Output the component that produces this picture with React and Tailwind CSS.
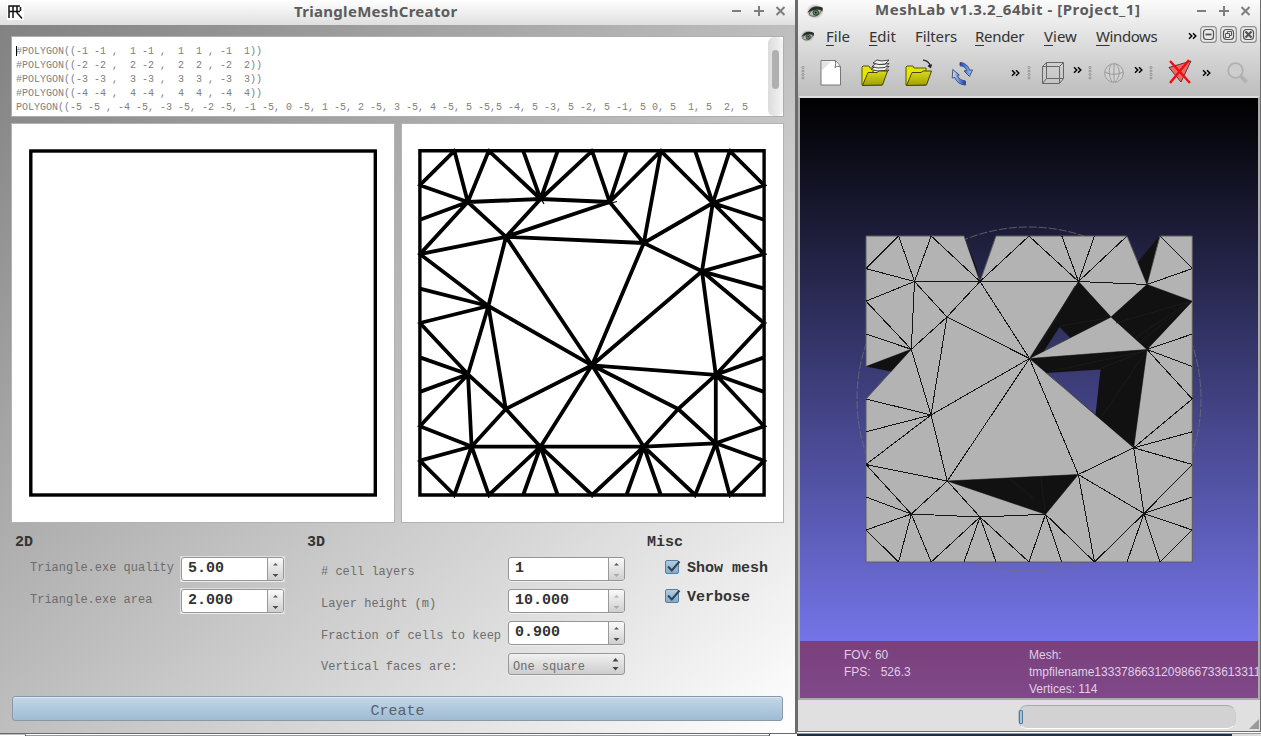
import React from "react";

/* ---------- mesh data ---------- */

const gx = [419.9, 454.4, 488.8, 523.2, 557.7, 592.1, 626.500, 660.8, 695.2, 729.700, 764.1];
const gy = [150.8, 185.2, 219.7, 254.1, 288.6, 323, 357.4, 391.9, 426.3, 460.7, 495];
const T = gx.map((x) => [x, gy[0]]);
const B = gx.map((x) => [x, gy[10]]);
const L = gy.map((y) => [gx[0], y]);
const R = gy.map((y) => [gx[10], y]);
const v = {
  a: [467.8, 202], b: [540.6, 199], c: [609.6, 202], d: [506, 236.8], e: [488.4, 306],
  f: [643.8, 243], g: [712.8, 203], h: [702, 271.3], i: [592, 365.3], j: [468, 374.3],
  k: [505.8, 409], l: [471.6, 446.5], m: [540.5, 446.7], n: [643.8, 446.7], o: [715.8, 443.3],
  p: [715.8, 374.8], q: [678.2, 409],
};
const fan = (c, list) => list.map((p) => [c, p]);
const edges2d = [
  [L[1], T[1]], [T[9], R[1]], [L[9], B[1]], [R[9], B[9]],
  ...fan(v.a, [T[1], T[2], L[1], L[2], L[3], v.b, v.d]),
  ...fan(v.b, [T[2], T[3], T[4], T[5], v.c, v.d]),
  ...fan(v.c, [T[5], T[6], T[7], v.d, v.f]),
  ...fan(v.d, [L[3], v.f, v.e, v.i]),
  ...fan(v.e, [L[3], L[4], L[5], v.i, v.j, v.k]),
  ...fan(v.f, [T[7], v.g, v.h, v.i]),
  ...fan(v.g, [T[7], T[8], T[9], R[1], R[2], R[3], v.h]),
  ...fan(v.h, [R[3], R[4], R[5], v.i, v.p]),
  ...fan(v.j, [L[5], L[6], L[7], L[8], v.k, v.l]),
  ...fan(v.k, [v.l, v.i, v.m]),
  ...fan(v.l, [L[8], L[9], B[1], B[2], v.m]),
  ...fan(v.m, [B[2], B[3], B[4], B[5], v.i, v.n]),
  ...fan(v.n, [B[5], B[6], B[7], B[8], v.i, v.q, v.o]),
  ...fan(v.o, [B[8], B[9], R[8], R[9], v.q, v.p]),
  ...fan(v.p, [R[5], R[6], R[7], R[8], v.i, v.q]),
  [v.i, v.q],
];

const hx = [866, 898.6, 931.2, 964, 996, 1029, 1061.8, 1094.5, 1127, 1160, 1192.3];
const hy = [236, 268.6, 301.2, 334, 366.5, 399, 431.8, 464.5, 497, 530, 562];
const t = hx.map((x) => [x, hy[0]]);
const u = hx.map((x) => [x, hy[10]]);
const l = hy.map((y) => [hx[0], y]);
const r = hy.map((y) => [hx[10], y]);
const w = {
  a: [914.5, 281.5], b: [980, 281.5], c: [947, 317], d: [911.3, 349.3], e: [931, 415],
  f: [1029.5, 358.5], g: [947.3, 481], h: [911.3, 514], i: [980, 517], j: [1078.5, 281.5],
  k: [1147, 284.5], l: [1111, 317], m: [1147, 349.5], n: [1133.7, 447.8], o: [1078.3, 474.5],
  p: [1144, 513.5], q: [1045.5, 514.3],
};
const edges3d = [
  [t[1], l[1]], [t[9], r[1]], [l[9], u[1]], [r[9], u[9]],
  ...fan(w.a, [t[1], t[2], l[1], l[2], w.b, w.c, w.d]),
  ...fan(w.b, [t[2], t[5], w.j, w.c, w.f]),
  ...fan(w.c, [w.d, w.e, w.f]),
  ...fan(w.d, [l[2], l[3], w.e]),
  ...fan(w.e, [l[5], l[6], l[7], w.f, w.g]),
  ...fan(w.f, [w.g, w.o]),
  ...fan(w.g, [l[7], w.h, w.i]),
  ...fan(w.h, [l[7], l[8], l[9], u[1], u[2], w.i]),
  ...fan(w.i, [u[2], u[3], u[4], u[5], w.q]),
  ...fan(w.j, [t[5], t[6], t[7], t[8], w.k]),
  [w.k, r[1]],
  ...fan(w.m, [r[3], r[4], r[5]]),
  ...fan(w.n, [r[5], r[6], r[7], w.o, w.p]),
  ...fan(w.o, [w.p, u[7]]),
  ...fan(w.p, [r[7], r[8], r[9], u[7], u[8], u[9]]),
  ...fan(w.q, [u[5], u[6], u[7]]),
];
const toPath = (edges) => edges.map(([p, q]) => `M${p[0]} ${p[1]}L${q[0]} ${q[1]}`).join("");
const poly = (...pts) => "M" + pts.map((p) => p.join(" ")).join("L") + "Z";

const surface =
  poly(t[0], t[3], w.b, t[4], t[8], w.k, t[9], t[10], u[10], u[0], l[5], w.d, l[4]) +
  poly(w.j, w.l, w.f) + poly(w.k, r[2], w.m, w.l) + poly(w.f, w.m, w.n) + poly(w.g, w.o, w.q);
const shadow =
  poly(w.j, w.l, w.f) + poly([1059.5, 327], [1070, 337.5], [1044, 351]) +
  poly(w.k, r[2], w.m, w.l) +
  poly(w.f, w.m, w.n) + poly([1046, 373], [1100.5, 369.5], [1095.5, 414.5]) +
  poly(w.g, w.o, w.q) + poly(l[4], w.d, [891, 371.5]) +
  poly([1159, 236.5], w.k, [1138, 262]) + poly(t[3], w.b, [976, 266]);

/* ---------- small parts ---------- */

function WindowButtons() {
  return (
    <svg className="block h-[12px] w-[56px]" viewBox="0 0 56 12" fill="none" stroke="#7d7d7d" strokeWidth="2">
      <path d="M1 6h9M23 6h10M28 1v10" />
      <path d="M45.500 2l8 8M53.500 2l-8 8" />
    </svg>
  );
}

function Spinner({ value, width, boxed, up = true, down = true }) {
  return (
    <div className={`flex h-[26px] p-px ${boxed ? "bg-[#dedede]" : ""} ${width}`}>
      <div className="flex min-w-0 flex-1 overflow-hidden rounded-[3px] border border-[#959595] bg-white shadow-[0_1px_0_#eeeeee]">
        <div className="flex-1 whitespace-pre pl-[6px] text-[15px] font-semibold leading-[22px] text-[#333]">{value}</div>
        <svg className="h-full w-[16px] border-l border-[#999] bg-gradient-to-b from-[#fafafa] to-[#cfcfcf]" viewBox="0 0 15 22">
          <path d="M5 7.500h5L7.500 5z" fill={up ? "#5a5a5a" : "#b0b0b0"} />
          <path d="M4.500 16h6l-3 3z" fill={down ? "#4c4c4c" : "#aaa"} />
        </svg>
      </div>
    </div>
  );
}

function Check({ label }) {
  return (
    <div className="flex h-[29px] items-center">
      <svg className="h-[16px] w-[18px]" viewBox="0 0 18 16">
        <defs>
          <linearGradient id="ck" x2="0" y2="1"><stop stopColor="#b4cfe3" /><stop offset="1" stopColor="#7fa9cc" /></linearGradient>
        </defs>
        <rect x="1.500" y="0.500" width="13" height="13" rx="1.500" fill="url(#ck)" stroke="#587da0" />
        <path d="M4 6.500l3.800 4L15.500 1.500" fill="none" stroke="#34424f" strokeWidth="2" />
      </svg>
      <span className="ml-[5px] whitespace-pre pt-[2px] text-[15px] font-bold leading-[18px] text-[#333]">{label}</span>
    </div>
  );
}

function Eye({ className }) {
  return (
    <svg className={className} viewBox="0 0 18 16">
      <defs><radialGradient id="eyeglow"><stop stopColor="#666" /><stop offset="0.55" stopColor="#999" /><stop offset="1" stopColor="#ddd" stopOpacity="0" /></radialGradient></defs>
      <ellipse cx="9" cy="8" rx="9" ry="8" fill="url(#eyeglow)" />
      <path d="M3 11C5 6 9 4.500 15.500 5c0 3-2 6-6 7.500-2.500.5-5 0-6.500-1.500z" fill="#b9beb7" stroke="#444" strokeWidth="0.800" />
      <path d="M1.500 9.500C4 4 9 1.500 16.500 4c.5 1 .3 3-.3 4.200C15 5.500 8 4.500 1.500 9.500z" fill="#2a2a2a" />
      <circle cx="9.800" cy="9" r="2.700" fill="#5f9464" stroke="#222" strokeWidth="0.900" />
      <circle cx="9.800" cy="9" r="0.900" fill="#101010" />
    </svg>
  );
}

function Chevrons({ className }) {
  return (
    <svg className={"h-[8px] w-[9px] shrink-0 " + className} viewBox="0 0 9 8" fill="none" stroke="#000" strokeWidth="1.500">
      <path d="M1 1.200l2.800 2.800L1 6.800M5 1.200l2.800 2.800L5 6.800" />
    </svg>
  );
}

function Handle({ className }) {
  return (
    <svg className={"h-[14px] w-[4px] shrink-0 " + className} viewBox="0 0 4 14" fill="#f5f5f5" stroke="#777" strokeWidth="0.800">
      <circle cx="2" cy="1.500" r="1" /><circle cx="2" cy="5" r="1" /><circle cx="2" cy="8.500" r="1" /><circle cx="2" cy="12" r="1" />
    </svg>
  );
}

function Folder({ stack, className }) {
  return (
    <svg className={"h-[28px] w-[30px] shrink-0 " + className} viewBox="0 0 30 28" strokeLinejoin="round">
      <defs><linearGradient id="fold" x2="0" y2="1"><stop stopColor="#dada20" /><stop offset="1" stopColor="#a0a000" /></linearGradient></defs>
      <path d="M1 26V8l1-1h6l1 2h12v17z" fill="#e6e600" stroke="#54540c" />
      {stack ? (
        <g fill="#f2f2f2" stroke="#222" strokeWidth="0.800">
          <path d="M10 14l4-3 5 1 9-1-4 4-7 1z" />
          <path d="M10 10.500l4-3 5 1 9-1-4 4-7 .5z" />
          <path d="M11 7.500l4-3 5 1 8-1-4 4-7 .5z" />
          <path d="M12 4l4-3 5 1 7-1-4 4-6 .5z" />
        </g>
      ) : (
        <g stroke="#222" fill="none" strokeWidth="1.200"><path d="M18 1.200c4 .3 6.500 2.500 7.500 6.500" /><path d="M23 6.500l2.500 2 1-3" fill="#222" /></g>
      )}
      <path d="M1.500 26.500L7 13.500h9l2-1.500h8.500L21.500 26z" fill="url(#fold)" stroke="#45450a" />
    </svg>
  );
}

function MdiButton({ children }) {
  return (
    <svg className="h-[17px] w-[17px]" viewBox="0 0 17 17" fill="none" stroke="#555" strokeWidth="1.200">
      <rect x="0.700" y="0.700" width="15.600" height="15.600" rx="3" fill="#e9e9e9" stroke="#8f8f8f" />
      <rect x="3.500" y="3.500" width="10" height="10" rx="3" />
      {children}
    </svg>
  );
}

function MenuItem({ pre = "", hot, post, className }) {
  return (
    <span className={"whitespace-pre " + className}>
      {pre}<span className="underline decoration-1 underline-offset-[3px]">{hot}</span>{post}
    </span>
  );
}

const Label = ({ children, className = "" }) => (
  <div className={"whitespace-pre text-[12px] leading-[16px] text-[#6c6c6c] " + className}>{children}</div>
);

/* ---------- triangle mesh window ---------- */

const polygonText = `#POLYGON((-1 -1 ,  1 -1 ,  1  1 , -1  1))
#POLYGON((-2 -2 ,  2 -2 ,  2  2 , -2  2))
#POLYGON((-3 -3 ,  3 -3 ,  3  3 , -3  3))
#POLYGON((-4 -4 ,  4 -4 ,  4  4 , -4  4))
POLYGON((-5 -5 , -4 -5, -3 -5, -2 -5, -1 -5, 0 -5, 1 -5, 2 -5, 3 -5, 4 -5, 5 -5,5 -4, 5 -3, 5 -2, 5 -1, 5 0, 5  1, 5  2, 5`;

function CreatorWindow() {
  return (
    <section className="flex h-[736px] w-[797px] shrink-0 flex-col">
      <div className="flex h-[733px] border-r-2 border-[#6b6b6b]">
        <div className="flex w-[795px] flex-col">
          <header className="flex h-[25px] shrink-0 items-center bg-gradient-to-b from-white to-[#dfdfdf]">
            <svg className="ml-[7px] mt-[-2px] h-[17px] w-[17px] bg-white" viewBox="0 0 17 17" fill="none" stroke="#111" strokeWidth="1.500">
              <path d="M2 15V3h11M2 8.500h11M6 15V3M10 3v7M13.500 4v4M10 10l2 2M12 12l3 3.500" />
            </svg>
            <h1 className="ml-[270px] w-[170px] whitespace-pre font-['Noto_Sans',sans-serif] text-[15px] font-bold leading-[24px] tracking-[0.300px] text-[#5c5c5c] -mt-[3px]">TriangleMeshCreator</h1>
            <div className="ml-[267px] mt-[-3px]"><WindowButtons /></div>
          </header>

          <div className="flex h-[708px] flex-col bg-gradient-to-br from-[#828282] to-white px-[11px] pt-[11px] font-['Liberation_Mono',monospace]">
            <div className="flex h-[81px] w-[773px] shrink-0 border border-[#aeaeae] bg-white">
              <pre className="relative w-[756px] overflow-hidden pl-[4px] pt-[8px] font-['Liberation_Mono',monospace] text-[10px] leading-[14px] text-[#808080]">
                <span className="absolute left-[4px] top-[9px] h-[10px] w-px bg-black" />
                {polygonText}
              </pre>
              <div className="flex w-[15px] justify-center rounded-[6px] bg-gradient-to-r from-[#dcdcdc] to-[#f4f4f4]">
                <div className="mt-[13px] h-[39px] w-[7px] rounded-full bg-[#b0b0b0]" />
              </div>
            </div>

            <div className="mt-[6px] flex w-[773px] shrink-0 gap-[6px]">
              <svg className="h-[400px] w-[384px] border border-[#b2b2b2] bg-white" viewBox="12 124 382 398">
                <rect x="30.800" y="151" width="344.500" height="344" fill="none" stroke="#000" strokeWidth="3.400" />
              </svg>
              <svg className="h-[400px] w-[383px] border border-[#b2b2b2] bg-white" viewBox="402 124 381 398">
                <path d={poly(T[0], T[10], B[10], B[0])} fill="none" stroke="#000" strokeWidth="3.400" />
                <path d={toPath(edges2d)} fill="none" stroke="#000" strokeWidth="3.800" />
                <path d="M454.400 148.500v3M488.700 148.500v3M592.100 148.500v3M660.800 148.500v3M729.700 148.500v3M417.500 185.400h3M417.500 254.200h3M417.500 323h3M417.500 426.400h3M417.500 460.800h3M764 185.400h3M764 254.200h3M764 323h3M764 426.400h3M764 460.800h3M454.400 495v3M488.700 495v3M592.100 495v3M695.200 495v3M729.700 495v3M604 205l13-3.500M537 202l4-3 3 5" fill="none" stroke="#000" strokeWidth="1.200" />
              </svg>
            </div>

            <div className="flex h-[173px] w-[773px] shrink-0">
              <div className="w-[291px] pl-[4px] pt-[11px]">
                <h2 className="text-[15px] font-bold leading-[17px] text-[#333]">2D</h2>
                <div className="mt-[5px] flex items-start">
                  <Label className="ml-[15px] mt-[4px] w-[150px]">Triangle.exe quality</Label>
                  <Spinner value="5.00" width="w-[105px]" boxed />
                </div>
                <div className="mt-[6px] flex items-start">
                  <Label className="ml-[15px] mt-[4px] w-[150px]">Triangle.exe area</Label>
                  <Spinner value="2.000" width="w-[105px]" boxed />
                </div>
              </div>

              <div className="w-[340px] pl-[5px] pt-[11px]">
                <h2 className="text-[15px] font-bold leading-[17px] text-[#333]">3D</h2>
                <div className="mt-[5px] flex items-start">
                  <Label className="ml-[14px] mt-[8px] w-[186px]"># cell layers</Label>
                  <Spinner value="1" width="w-[119px]" down={false} />
                </div>
                <div className="mt-[6px] flex items-start">
                  <Label className="ml-[14px] mt-[8px] w-[186px]">Layer height (m)</Label>
                  <Spinner value="10.000" width="w-[119px]" up={false} down={false} />
                </div>
                <div className="mt-[6px] flex items-start">
                  <Label className="ml-[14px] mt-[8px] w-[186px]">Fraction of cells to keep</Label>
                  <Spinner value="0.900" width="w-[119px]" />
                </div>
                <div className="mt-[7px] flex items-start">
                  <Label className="ml-[14px] mt-[6px] w-[187px]">Vertical faces are:</Label>
                  <div className="flex h-[22px] w-[117px] items-center justify-between rounded-[3px] border border-[#999] bg-gradient-to-b from-[#f1f1f1] to-[#cdcdcd] pl-[4px] pr-[5px] shadow-[0_1px_0_#eee]">
                    <Label className="pt-[5px]">One square</Label>
                    <svg className="h-[14px] w-[7px]" viewBox="0 0 7 14" fill="#444"><path d="M.5 4.500h6L3.500 1zM.5 10h6l-3 3.500z" /></svg>
                  </div>
                </div>
              </div>

              <div className="pl-[5px] pt-[11px]">
                <h2 className="text-[15px] font-bold leading-[17px] text-[#333]">Misc</h2>
                <div className="ml-[17px] mt-[2px]"><Check label="Show mesh" /><Check label="Verbose" /></div>
              </div>
            </div>

            <button className="ml-px h-[25px] w-[771px] shrink-0 rounded-[3px] border border-[#8798a8] bg-gradient-to-b from-[#c3d6e6] to-[#9fbcd5] pt-[5px] text-[15px] leading-[19px] text-[#58626b] shadow-[inset_0_1px_1px_#dbe9f4]">Create</button>
          </div>
        </div>
      </div>
      <div className="flex h-[3px] items-end border-t border-[#6a6a6a] bg-white">
        <span className="h-[2px] w-[26px] border-r border-t border-r-[#555] border-t-[#bbb]" />
        <span className="h-[1px] w-[743px] bg-[#999]" />
        <span className="h-[2px] w-px bg-[#555]" />
      </div>
    </section>
  );
}

/* ---------- viewer window ---------- */

function MeshLabWindow() {
  return (
    <section className="flex h-[736px] w-[464px] shrink-0 flex-col">
      <div className="flex h-[732px] flex-col border-x border-b border-[#6d6d6d] bg-[#e0e0e0]">
        <div className="h-[96px] shrink-0 bg-gradient-to-b from-[#fbfbfb] via-[#dddddd] via-45% to-[#bdbdbd] font-['Noto_Sans',sans-serif]">
          <div className="flex h-[22px] items-center">
            <Eye className="ml-[8px] h-[17px] w-[18px]" />
            <h1 className="-mt-[3px] ml-[51px] w-[272px] whitespace-pre text-[15px] font-bold leading-[21px] tracking-[0.520px] text-[#5c5c5c]">MeshLab v1.3.2_64bit - [Project_1]</h1>
            <div className="-mt-px ml-[49px]"><WindowButtons /></div>
          </div>
          <div className="flex h-[28px] items-center text-[15px] text-[#333]">
            <Eye className="ml-[2px] h-[14px] w-[15px] shrink-0" />
            <MenuItem hot="F" post="ile" className="ml-[11px] w-[43px] shrink-0" />
            <MenuItem hot="E" post="dit" className="w-[46px] shrink-0" />
            <MenuItem pre="Fi" hot="l" post="ters" className="w-[60px] shrink-0 tracking-[-0.1px]" />
            <MenuItem hot="R" post="ender" className="w-[69px] shrink-0 tracking-[-0.3px]" />
            <MenuItem hot="V" post="iew" className="w-[52px] shrink-0" />
            <MenuItem hot="W" post="indows" className="w-[92px] shrink-0 tracking-[-0.4px]" />
            <Chevrons className="" />
            <div className="-mt-[3px] ml-[3px] flex gap-[2.500px]">
              <MdiButton><path d="M5.500 8.500h6" strokeWidth="1.800" /></MdiButton>
              <MdiButton><path d="M5.500 7.500h4v4h-4zM7.500 7V5.500h4v4H10" strokeWidth="1" /></MdiButton>
              <span className="ml-[1px]"><MdiButton><path d="M5.500 5.500l6 6M11.500 5.500l-6 6" strokeWidth="2.200" /></MdiButton></span>
            </div>
          </div>
          <div className="flex h-[46px] items-center">
            <Handle className="ml-[3px]" />
            <svg className="ml-[14px] h-[28px] w-[24px] shrink-0" viewBox="0 0 24 28">
              <path d="M2 1.500h14.500l5 6V26H2z" fill="#fff" stroke="#777" />
              <path d="M3 2.500h9l-9 9z" fill="#ccc" opacity=".55" />
              <path d="M16 1.500c1 2 .8 4 0 7 2-1.500 3.500-1.500 5.500-.5" fill="#fff" stroke="#666" />
            </svg>
            <Folder stack className="ml-[18px]" />
            <Folder className="ml-[14px]" />
            <svg className="ml-[13px] mt-[-3px] h-[28px] w-[28px] shrink-0" viewBox="0 0 28 28" stroke="#3c4766" strokeWidth="0.900" strokeLinejoin="round">
              <defs><linearGradient id="bl" x2="1"><stop stopColor="#1146c8" /><stop offset="1" stopColor="#a8c7ff" /></linearGradient><linearGradient id="br" x2="1"><stop stopColor="#cfe0ff" /><stop offset="1" stopColor="#0b3ec0" /></linearGradient></defs>
              <path d="M12 4.500c5 .2 8.500 3.500 9.500 7.500h3l-3 6.500-5.500-5.500 2.700-.5C17.500 9 15 8 12 7.800z" fill="url(#bl)" />
              <path d="M17.500 27c-5.500-.3-9.500-3.500-10.500-7.500l-2.800.5L4.800 11.500l6.500 5.500-2 .5c1.500 3.500 4.500 5 8.200 5.500z" fill="url(#br)" />
            </svg>
            <Chevrons className="ml-[35px]" />
            <Handle className="ml-[7px]" />
            <svg className="ml-[10px] h-[24px] w-[24px] shrink-0" viewBox="0 0 24 24" fill="none" stroke="#666" strokeWidth="1">
              <path d="M1.500 5.500h17v17h-17zM5.500 1.500h17v16h-17zM1.500 5.500l4-4M18.500 5.500l4-4M18.500 22.500l4-5M1.500 22.500l4-5" />
            </svg>
            <Chevrons className="mb-[7px] ml-[8px]" />
            <Handle className="ml-[6px]" />
            <svg className="ml-[11px] h-[22px] w-[22px] shrink-0" viewBox="0 0 22 22" fill="none" stroke="#999" strokeWidth="1">
              <circle cx="11" cy="11" r="9.300" fill="#d2d2d2" /><path d="M2 10c5 3 13 3 18 0M11 2v18M13 2c5 6 4 13-1 18M8 2.500C5 8 6 14 9 20" />
            </svg>
            <Chevrons className="mb-[7px] ml-[9px]" />
            <Handle className="ml-[6px]" />
            <svg className="ml-[14px] mt-[-2px] h-[26px] w-[26px] shrink-0" viewBox="0 0 26 26">
              <path d="M2 8.500L24 2 14 23z" fill="#ef6969" stroke="#5b3535" />
              <path d="M3 2l20 22M22 1L3 24" stroke="#f00d0d" strokeWidth="2.400" fill="none" />
            </svg>
            <Chevrons className="ml-[9px]" />
            <svg className="ml-[14px] h-[24px] w-[24px] shrink-0" viewBox="0 0 24 24" fill="none" stroke="#b0b0b0">
              <circle cx="10.500" cy="9.500" r="7.300" strokeWidth="1.800" fill="#cecece" /><path d="M15.500 15l6 6" strokeWidth="3.500" />
            </svg>
          </div>
        </div>
        <div className="relative flex h-[604px] shrink-0 flex-col border-2 border-b-2 border-[#aaa] border-t-[#dcdcdc] bg-[linear-gradient(to_bottom,#000_0px,#7474e8_543px,#7878ec_600px)]">
          <svg className="block h-[543px] w-[458px] shrink-0" viewBox="800 98 458 543">
            <circle cx="1029" cy="399" r="172" fill="none" stroke="#6e6e72" strokeWidth="0.800" strokeDasharray="8 2" />
            <path d={surface} fill="#b3b3b3" fillRule="evenodd" stroke="#5c5c5c" strokeWidth="1" />
            <path d={shadow} fill="#111" fillRule="evenodd" />
            <path d="M1036 352L1075 286M1060 326l48-8M1116 323l72-21M1135 338l54-36M1140 342l50-40M1052 371l94-20M1102 368l44-18M1102 416l43-63M1010 479l24 20M1041 477l4 34" stroke="#1d1d1d" strokeWidth="0.800" fill="none" />
            <path d={toPath(edges3d)} fill="none" stroke="#151515" strokeWidth="1" shapeRendering="crispEdges" />
          </svg>
          <div className="flex h-[57px] overflow-hidden bg-gradient-to-b from-[#7b407c] to-[#80488a] pt-[6px] font-['Liberation_Sans',sans-serif] text-[12px] leading-[17px] text-[#dfd0e4]">
            <div className="w-[229px] whitespace-pre pl-[44px]">FOV: 60<br />FPS:   526.3</div>
            <div className="w-[229px] whitespace-pre">Mesh:<br />tmpfilename1333786631209866733613311<br />Vertices: 114</div>
          </div>
        </div>
        <div className="flex h-[31px] shrink-0 items-center">
          <div className="ml-[220px] mt-[2px] flex h-[24px] w-[218px] items-center rounded-[9px] border border-b-white border-l-[#bbb] border-r-[#ccc] border-t-[#aaa] bg-[#d2d2d2]">
            <span className="h-[14px] w-[4px] rounded-[1px] border border-[#527ba0] bg-[#a2c6e2]" />
          </div>
          <svg className="ml-[13px] mt-[17px] h-[10px] w-[10px]" viewBox="0 0 10 10"><path d="M10 0v10H0z" fill="#999" /></svg>
        </div>
      </div>
      <div className="flex h-[4px] flex-col bg-[#ddd]">
        <div className="h-[2px] w-full border-b border-[#999] bg-white" />
        <div className="h-[2px] w-[435px] bg-[#17324d]" />
      </div>
    </section>
  );
}

export default function App() {
  return (
    <main className="flex h-[736px] w-[1261px] overflow-hidden bg-white">
      <CreatorWindow />
      <MeshLabWindow />
    </main>
  );
}
